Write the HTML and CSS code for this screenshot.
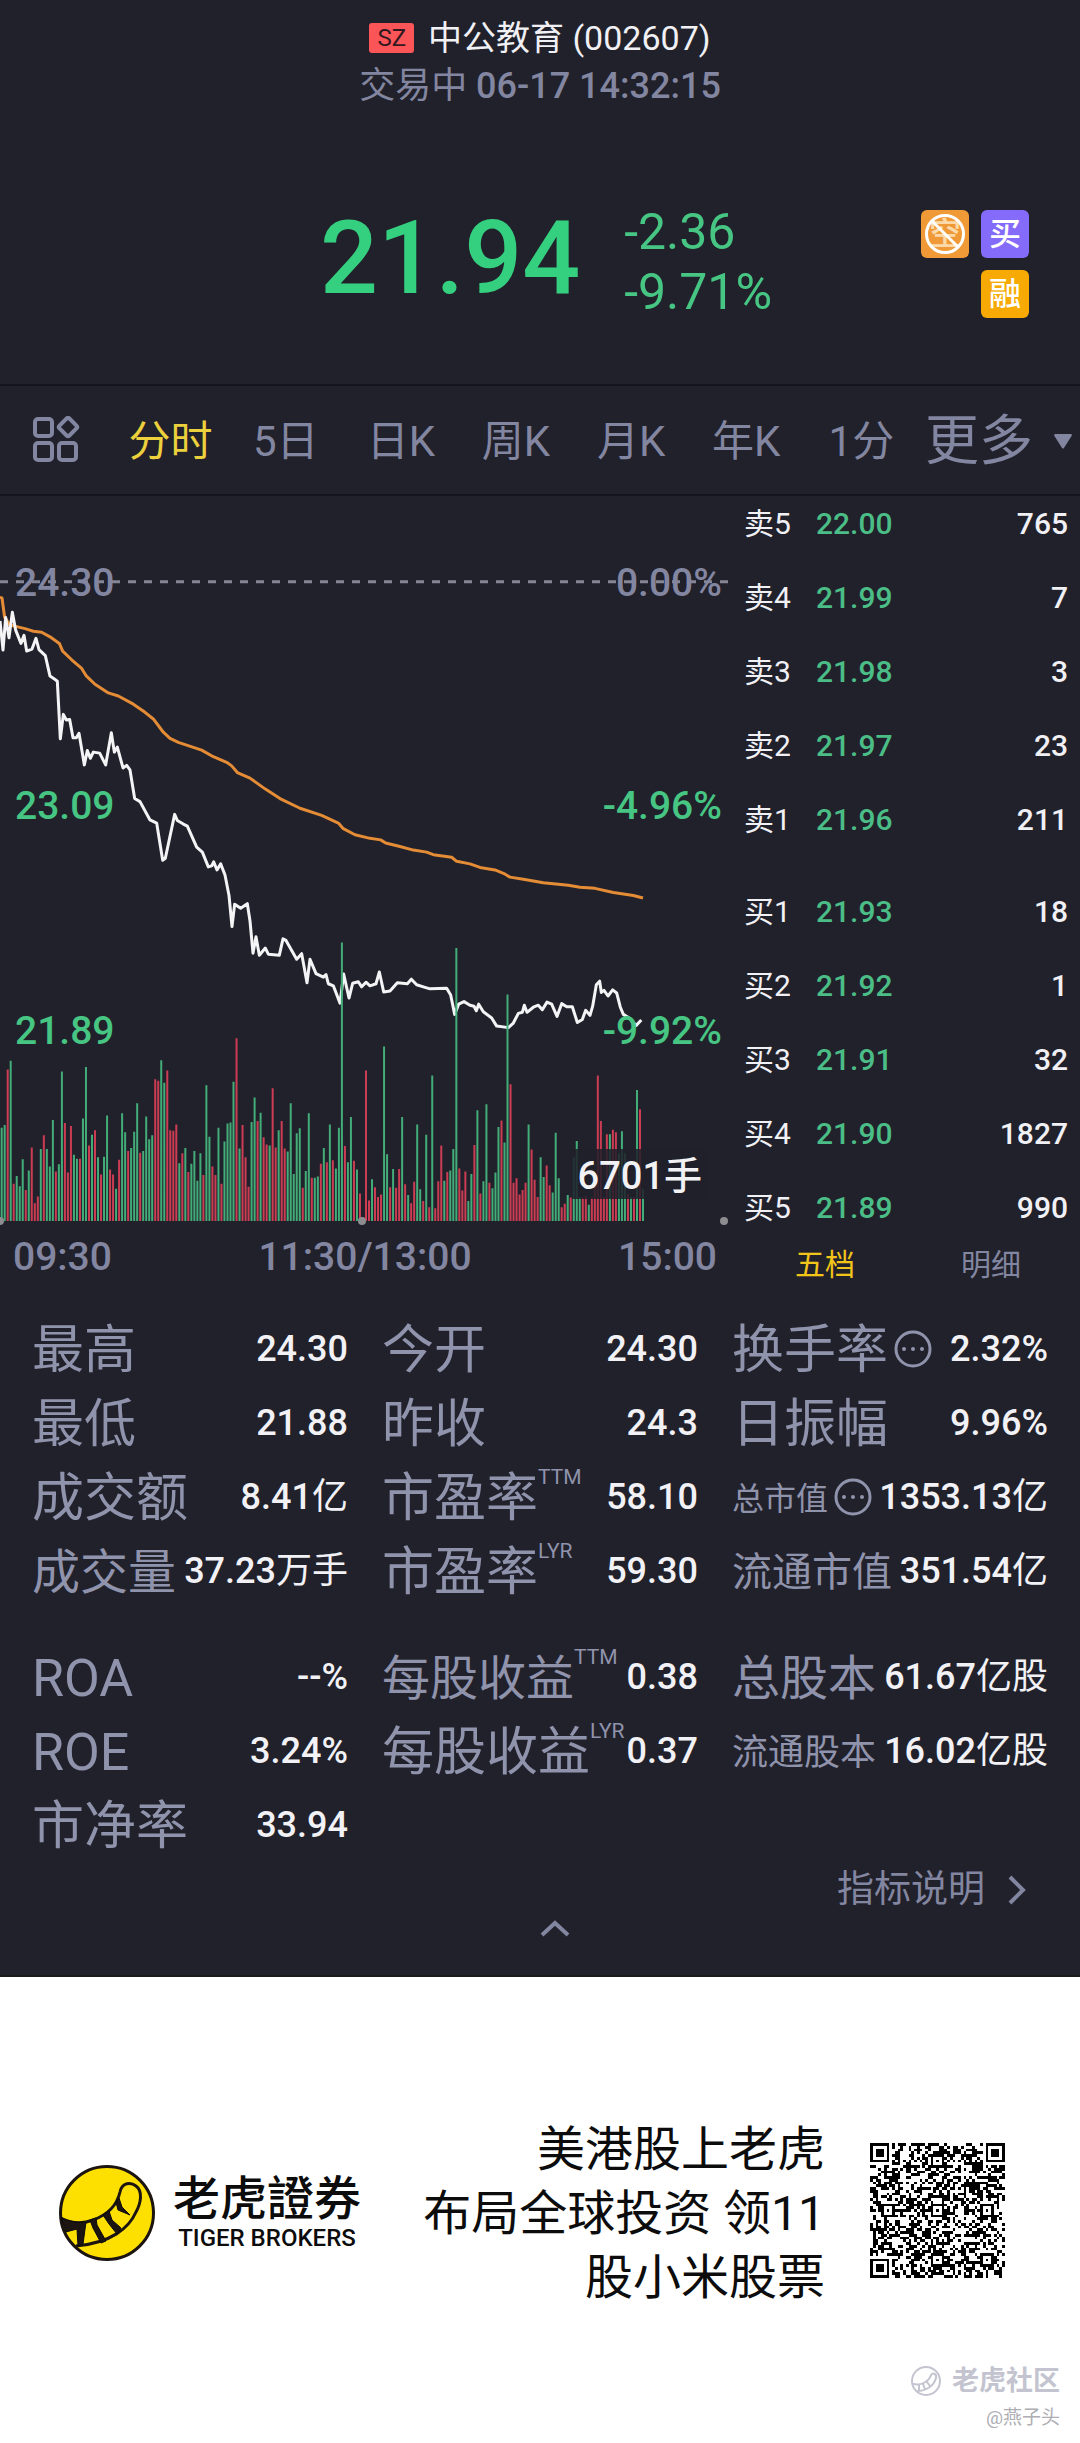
FILE: index.html
```html
<!DOCTYPE html>
<html lang="zh-CN">
<head>
<meta charset="utf-8">
<meta name="viewport" content="width=device-width, initial-scale=1">
<title>中公教育 (002607)</title>
<link rel="stylesheet" href="styles.css">
</head>
<body>
<main class="panel">
  <header class="quote">
    <h1 class="quote-title"><span class="market">SZ</span>中公教育 (002607)</h1>
    <p class="quote-time">交易中 <b>06-17 14:32:15</b></p>
    <div class="quote-row">
      <div class="quote-figures">
        <strong class="price">21.94</strong>
        <div class="change"><span>-2.36</span><span>-9.71%</span></div>
      </div>
      <div class="flags">
        <span class="flag flag-short">空
          <svg viewBox="0 0 48 48" aria-hidden="true"><circle cx="24" cy="24" r="18.5"/><path d="M11 11 37 37"/></svg>
        </span>
        <span class="flag flag-buy">买</span>
        <span class="flag flag-margin">融</span>
      </div>
    </div>
  </header>

  <nav class="tabs">
    <button class="tab-grid" aria-label="布局">
      <svg viewBox="0 0 48 48" aria-hidden="true"><rect x="2" y="3" width="17" height="17" rx="3"/><rect x="2" y="27" width="17" height="17" rx="3"/><rect x="26" y="27" width="17" height="17" rx="3"/><rect x="28" y="4" width="14" height="14" rx="2" transform="rotate(45 35 11)"/></svg>
    </button>
    <button class="tab active">分时</button>
    <button class="tab">5日</button>
    <button class="tab">日K</button>
    <button class="tab">周K</button>
    <button class="tab">月K</button>
    <button class="tab">年K</button>
    <button class="tab">1分</button>
    <button class="tab tab-more">更多<svg viewBox="0 0 18 16" aria-hidden="true"><path d="M2 2H16L9 13Z"/></svg></button>
  </nav>

  <section class="market-view">
    <div class="chart">
      <div class="plot">
        <svg class="plot-svg" viewBox="0 12 2184 1421" preserveAspectRatio="none" role="img" aria-label="分时走势">
          <path class="base-line" d="M0 180H2184"/>
          <path class="average" d="M0 210 6 212 14 250 30 265 50 268 75 272 100 277 125 279 150 288 178 301 188 316 215 333 245 350 258 364 285 381 325 398 355 404 400 420 435 436 460 449 490 475 510 487 535 495 605 510 640 523 680 534 695 541 712 554 750 565 795 586 840 605 900 624 965 638 1015 653 1030 664 1065 676 1110 683 1142 686 1157 692 1200 699 1240 706 1280 710 1300 715 1355 720 1370 728 1410 733 1440 740 1485 745 1512 752 1530 759 1570 763 1630 770 1705 775 1740 779 1785 781 1840 789 1900 795 1929 800"/>
          <path class="trend" d="M0 257 9 314 17 250 27 290 37 240 47 275 63 301 72 285 80 316 96 312 108 291 117 313 136 325 150 365 162 370 172 375 181 488 190 440 199 451 209 450 219 486 229 486 237 477 253 539 262 511 271 526 280 514 299 516 317 539 334 476 343 514 352 504 369 545 380 540 390 549 404 605 420 611 450 647 470 653 488 726 496 722 524 636 532 648 550 655 562 659 590 700 607 710 625 739 635 737 641 729 651 745 662 733 675 755 687 795 696 856 704 812 722 820 742 811 750 845 759 908 768 876 778 912 796 898 805 910 838 912 849 880 858 883 890 920 905 909 921 966 930 920 948 948 970 955 978 950 985 968 1000 972 1020 1006 1031 949 1047 996 1058 967 1075 964 1085 974 1098 965 1110 972 1128 968 1138 945 1151 984 1170 982 1192 966 1222 968 1234 959 1250 970 1270 974 1290 978 1340 977 1352 990 1364 1028 1376 1008 1392 1003 1410 1010 1422 1012 1429 1021 1436 1008 1450 1023 1475 1035 1490 1051 1525 1054 1540 1045 1555 1026 1567 1024 1573 1010 1581 1024 1600 1014 1615 1010 1627 1019 1641 1004 1655 1008 1671 1032 1685 1007 1700 1013 1717 1013 1732 1044 1747 1038 1757 1020 1770 1030 1778 1012 1789 970 1799 963 1804 985 1812 981 1824 992 1838 980 1850 986 1861 1014 1870 1028 1890 1036 1908 1050 1924 1039"/>
          <path class="volume-up" id="volume-up"/>
          <path class="volume-down" id="volume-down"/>
        </svg>
        <div class="axis axis-top"><span>24.30</span><span>0.00%</span></div>
        <div class="axis axis-mid"><span>23.09</span><span>-4.96%</span></div>
        <div class="axis axis-low"><span>21.89</span><span>-9.92%</span></div>
        <span class="volume-label">6701手</span>
        <div class="ticks"><i></i><i></i><i></i></div>
      </div>
      <div class="times"><span>09:30</span><span>11:30/13:00</span><span>15:00</span></div>
    </div>

    <div class="book">
      <table class="levels">
        <tbody>
          <tr><th scope="row">卖5</th><td>22.00</td><td>765</td></tr>
          <tr><th scope="row">卖4</th><td>21.99</td><td>7</td></tr>
          <tr><th scope="row">卖3</th><td>21.98</td><td>3</td></tr>
          <tr><th scope="row">卖2</th><td>21.97</td><td>23</td></tr>
          <tr><th scope="row">卖1</th><td>21.96</td><td>211</td></tr>
        </tbody>
        <tbody class="bids">
          <tr><th scope="row">买1</th><td>21.93</td><td>18</td></tr>
          <tr><th scope="row">买2</th><td>21.92</td><td>1</td></tr>
          <tr><th scope="row">买3</th><td>21.91</td><td>32</td></tr>
          <tr><th scope="row">买4</th><td>21.90</td><td>1827</td></tr>
          <tr><th scope="row">买5</th><td>21.89</td><td>990</td></tr>
        </tbody>
      </table>
      <div class="book-tabs"><button class="active">五档</button><button>明细</button></div>
    </div>
  </section>

  <section class="stats">
    <dl class="stat-grid">
      <div class="stat"><dt>最高</dt><dd>24.30</dd></div>
      <div class="stat"><dt>今开</dt><dd>24.30</dd></div>
      <div class="stat"><dt>换手率<svg class="info" viewBox="0 0 38 38" aria-hidden="true"><circle class="ring" cx="19" cy="19" r="17"/><circle cx="10" cy="19" r="2"/><circle cx="19" cy="19" r="2"/><circle cx="28" cy="19" r="2"/></svg></dt><dd>2.32%</dd></div>
      <div class="stat"><dt>最低</dt><dd>21.88</dd></div>
      <div class="stat"><dt>昨收</dt><dd>24.3</dd></div>
      <div class="stat"><dt>日振幅</dt><dd>9.96%</dd></div>
      <div class="stat"><dt>成交额</dt><dd>8.41<span class="unit">亿</span></dd></div>
      <div class="stat"><dt>市盈率<sup>TTM</sup></dt><dd>58.10</dd></div>
      <div class="stat"><dt class="label-xs">总市值<svg class="info" viewBox="0 0 38 38" aria-hidden="true"><circle class="ring" cx="19" cy="19" r="17"/><circle cx="10" cy="19" r="2"/><circle cx="19" cy="19" r="2"/><circle cx="28" cy="19" r="2"/></svg></dt><dd>1353.13<span class="unit">亿</span></dd></div>
      <div class="stat"><dt class="label-lg">成交量</dt><dd>37.23<span class="unit">万手</span></dd></div>
      <div class="stat"><dt>市盈率<sup>LYR</sup></dt><dd>59.30</dd></div>
      <div class="stat"><dt class="label-md">流通市值</dt><dd>351.54<span class="unit">亿</span></dd></div>
    </dl>
    <dl class="stat-grid">
      <div class="stat"><dt>ROA</dt><dd>--%</dd></div>
      <div class="stat"><dt class="label-lg">每股收益<sup>TTM</sup></dt><dd>0.38</dd></div>
      <div class="stat"><dt class="label-lg">总股本</dt><dd>61.67<span class="unit">亿股</span></dd></div>
      <div class="stat"><dt>ROE</dt><dd>3.24%</dd></div>
      <div class="stat"><dt>每股收益<sup>LYR</sup></dt><dd>0.37</dd></div>
      <div class="stat"><dt class="label-sm">流通股本</dt><dd>16.02<span class="unit">亿股</span></dd></div>
      <div class="stat"><dt>市净率</dt><dd>33.94</dd></div>
    </dl>
    <a class="guide" href="#guide">指标说明<svg viewBox="0 0 20 32" aria-hidden="true"><path d="M3 3 16 16 3 29"/></svg></a>
    <button class="collapse" aria-label="收起"><svg viewBox="0 0 32 18" aria-hidden="true"><path d="M3 15 16 3 29 15"/></svg></button>
  </section>
</main>

<footer class="promo">
  <div class="promo-row">
    <div class="brand">
      <svg class="brand-mark" viewBox="0 0 96 96" aria-hidden="true">
        <circle cx="48" cy="48" r="46.500" fill="#fde000" stroke="#1c1410" stroke-width="3"/>
        <path d="M2 54C12 58 24 59 34 55C48 50 58 40 61 27C63 17 72 17 77 21C84 26 82 38 77 47C70 63 52 78 17 81" fill="none" stroke="#1c1410" stroke-width="3"/>
        <path d="M2 52C11 57 19 58 27 57L24 79 19 81 18 64 7 67ZM31 55 37 53 38 60 47 76 42 78 34 63ZM44 50 50 46 53 55 62 63 58 69 50 59ZM57 37 60 33 63 42 71 50 59 45Z" fill="#1c1410"/>
      </svg>
      <div class="brand-text"><strong>老虎證券</strong><span>TIGER BROKERS</span></div>
    </div>
    <p class="slogan">美港股上老虎<br>布局全球投资 领11<br>股小米股票</p>
    <svg class="qr" viewBox="0 0 49 49" role="img" aria-label="二维码" shape-rendering="crispEdges"><path id="qr-modules"/></svg>
  </div>
  <div class="community">
    <span class="community-name"><svg viewBox="0 0 32 32" aria-hidden="true"><circle cx="16" cy="16" r="14"/><path d="M3 19C12 21 19 16 21 10C23 7 27 9 26 13C24 21 16 26 7 26M9 20V25M13 19 15 24M17 17 20 21"/></svg>老虎社区</span>
    <span class="community-user">@燕子头</span>
  </div>
</footer>
<script src="chart.js"></script>
</body>
</html>
```
FILE: styles.css
```css
* { box-sizing: border-box; }
body { margin: 0; background: #fff; font-family: Roboto, "Noto Sans CJK SC", sans-serif; }
h1, p, dl, dd { margin: 0; }
button { padding: 0; border: 0; background: none; color: inherit; font: inherit; }
a { color: inherit; text-decoration: none; }
svg { display: block; fill: none; stroke: currentColor; }

.panel { background: #21212b; color: #8386a0; border-bottom: 2px solid #1b191c; }

.quote { padding: 14px 0 64px; }
.quote-title { display: flex; justify-content: center; align-items: center; gap: 14px; line-height: 48px; font-size: 34px; font-weight: 400; color: #f0f0f5; }
.market { padding: 0 8px; border-radius: 3px; background: #fb5558; color: #33181f; font-size: 24px; line-height: 30px; }
.quote-time { text-align: center; font-size: 36px; line-height: 48px; }
.quote-time b { font-weight: 500; }
.quote-row { display: grid; grid-template-columns: 1fr auto 1fr; align-items: start; margin-top: 92px; padding: 0 51px 0 63px; }
.quote-figures { grid-column: 2; display: flex; gap: 44px; color: #35d07f; }
.price { font-size: 102px; line-height: 112px; font-weight: 500; }
.change { display: flex; flex-direction: column; font-size: 50px; line-height: 60px; color: #46c583; }
.flags { justify-self: end; display: grid; grid-template-columns: 48px 48px; gap: 12px; padding-top: 8px; }
.flag { position: relative; border-radius: 6px; color: #fff; text-align: center; font-size: 32px; font-weight: 500; line-height: 48px; }
.flag-short { background: #f09a37; color: #fbd9a8; }
.flag-short svg { position: absolute; inset: 0; stroke: #fff; stroke-width: 3; }
.flag-buy { background: #846bfa; }
.flag-margin { grid-column: 2; background: #f8aa04; }

.tabs { display: grid; grid-template-columns: 80px repeat(7, 1fr) 161px; align-items: center; margin-top: -2px; padding-left: 33px; border-top: 2px solid #14141d; border-bottom: 2px solid #14141d; font-size: 42px; line-height: 104px; }
.tab-grid svg { width: 48px; stroke-width: 4; }
.tab { padding-top: 4px; white-space: nowrap; }
.tab.active { color: #ecd03c; }
.tab-more { display: flex; align-items: center; gap: 20px; padding-left: 6px; font-size: 54px; }
.tab-more svg { width: 20px; fill: currentColor; stroke-width: 2; stroke-linejoin: round; }

.market-view { display: grid; grid-template-columns: 728fr 352fr; }
.plot { position: relative; }
.plot-svg { width: 100%; aspect-ratio: 728 / 725; }
.plot-svg path { vector-effect: non-scaling-stroke; stroke-width: 3; stroke-linejoin: round; }
.plot-svg .base-line { stroke: #858796; stroke-width: 3; stroke-dasharray: 8 8; }
.plot-svg .average { stroke: #e58c36; }
.plot-svg .trend { stroke: #f4f4f6; }
.plot-svg .volume-up { stroke: #43ad79; stroke-width: 2; }
.plot-svg .volume-down { stroke: #cc3d54; stroke-width: 2; }
.axis { position: absolute; left: 0; right: 0; display: flex; justify-content: space-between; padding: 0 6px 0 15px; font-size: 39px; line-height: 44px; font-weight: 500; color: #46c583; }
.axis-top { top: 9%; color: #8386a0; }
.axis-mid { top: 40%; margin-top: -2px; }
.axis-low { top: 71%; margin-top: -2px; }
.volume-label { position: absolute; right: 20px; bottom: 22px; padding: 4px 6px 0; background: rgba(32, 32, 42, .85); color: #f2f2f5; font-size: 38px; line-height: 46px; font-weight: 500; }
.ticks { position: absolute; left: -4px; right: 0; bottom: -4px; display: flex; justify-content: space-between; }
.ticks i { width: 8px; height: 8px; border-radius: 50%; background: #8d8d90; }
.times { display: flex; justify-content: space-between; padding: 0 11px 0 13px; font-size: 39px; line-height: 72px; font-weight: 500; }

.levels { width: 100%; border-collapse: collapse; font-size: 30px; line-height: 56px; color: #f0f0f5; }
.levels th, .levels td { padding: 0 0 18px; text-align: left; font-weight: 500; }
.levels th { width: 88px; padding-left: 16px; font-weight: 400; }
.levels td:nth-child(2) { color: #4bbd86; }
.levels td:last-child { padding-right: 12px; text-align: right; }
.levels .bids tr:first-child > * { padding-top: 18px; }
.levels .bids tr:last-child > * { padding-bottom: 0; }
.book-tabs { display: grid; grid-template-columns: 1fr 1fr; padding: 9px 6px 0 14px; font-size: 30px; line-height: 40px; }
.book-tabs .active { color: #f0c419; }

.stats { display: flex; flex-direction: column; padding: 19px 32px 0; }
.stat-grid { display: grid; grid-template-columns: repeat(3, 1fr); column-gap: 34px; }
.stat-grid + .stat-grid { margin-top: 32px; }
.stat { display: flex; align-items: center; justify-content: space-between; height: 74px; white-space: nowrap; }
.stat dt { display: flex; align-items: center; padding-top: 4px; font-size: 52px; line-height: 74px; color: #9093ac; }
.stat .label-lg { font-size: 48px; }
.stat .label-md { font-size: 40px; }
.stat .label-sm { font-size: 36px; }
.stat .label-xs { font-size: 32px; }
.stat dd { color: #f2f2f6; font-size: 36px; line-height: 74px; font-weight: 500; }
.unit { font-weight: 400; }
.stat sup { align-self: flex-start; font-size: 21px; line-height: 30px; }
.info { width: 38px; margin: 0 0 4px 6px; }
.info circle { fill: currentColor; stroke: none; }
.info .ring { fill: none; stroke: currentColor; stroke-width: 3; }
.guide { align-self: flex-end; display: flex; align-items: center; gap: 22px; padding-right: 21px; font-size: 37px; line-height: 56px; }
.guide svg { width: 20px; stroke-width: 4; }
.collapse { align-self: center; padding: 2px 0 37px 30px; }
.collapse svg { width: 32px; stroke-width: 4; }

.promo { padding: 139px 0 6px; color: #0c0c0c; }
.promo-row { display: flex; align-items: center; padding: 0 75px 0 59px; }
.brand { display: flex; align-items: center; gap: 18px; }
.brand-mark { width: 96px; }
.brand-text { display: flex; flex-direction: column; align-items: center; padding-top: 4px; }
.brand-text strong { font-size: 47px; line-height: 46px; font-weight: 500; }
.brand-text span { font-size: 24px; line-height: 32px; font-weight: 500; }
.slogan { margin-left: auto; padding-top: 2px; text-align: right; font-size: 48px; line-height: 64px; }
.qr { width: 135px; margin: 0 0 6px 45px; stroke: none; fill: #000; }
.community { display: flex; flex-direction: column; align-items: flex-end; margin-top: 53px; padding-right: 20px; line-height: 38px; color: #c3c4cf; }
.community-name { display: flex; align-items: center; gap: 10px; font-size: 27px; line-height: 36px; font-weight: 700; }
.community-name svg { width: 32px; stroke-width: 2; }
.community-user { font-size: 19px; color: #aeaeb4; }
```
FILE: chart.js
```js
// Top of each one-minute volume bar; a minus sign marks a falling minute.
const bars = [
  1250, 1245, -1136, 1119, -1360, 1345, 1365, 1312, -1372, 1334, -1289, -1398, -1385, 1292, -1265, 1292, 1326, 1235, -1336, 1322,
  1140, -1241, -1338, -1247, 1303, 1311, -1311, 1232, 1131, -1285, 1264, -1255, 1308, -1342, 1307, 1226, -1332, -1342, 1370, -1313,
  1222, 1259, -1296, 1290, 1258, 1202, -1299, 1296, 1228, 1273, 1265, -1155, -1158, 1118, 1162, -1138, -1255, -1256, -1244, 1320,
  -1300, 1290, -1337, 1321, 1296, 1354, 1300, -1343, 1167, 1268, -1326, -1343, 1250, -1360, 1277, 1242, 1240, 1160, -1075, 1291,
  -1245, -1308, -1366, 1239, 1191, -1237, 1221, -1269, -1283, 1285, -1173, -1289, 1255, -1237, -1291, 1297, 1202, 1341, 1261, 1251,
  -1368, 1335, 1222, -1348, 1348, 1346, -1321, 1290, -1318, 1244, -1314, 1330, 1250, 887, -1286, 1318, 1229, -1315, 1332, -1379,
  -1425, -1138, -1393, 1351, -1367, -1386, -1381, 1091, 1302, -1367, 1331, -1368, -1331, 1229, -1361, 1382, -1398, -1356, 1244, 1371,
  -1394, 1264, -1406, 1148, -1408, -1355, -1285, 1354, -1337, 1334, 1292, 898, -1330, -1373, -1336, 1394, 1341, -1284, 1216, -1379,
  1355, 1204, -1358, 1369, 1338, 1249, -1236, 1279, 989, -1165, -1358, -1349, -1381, -1372, -1358, 1244, -1293, -1352, -1386, 1308,
  1347, -1324, -1363, 1377, 1260, 1349, -1406, -1399, 1382, -1387, 1308, 1276, 1386, -1387, -1384, 1401, -1386, -1350, -1148, -1237,
  -1386, -1263, 1263, -1254, -1259, 1300, 1257, 1300, -1380, 1386, -1386, 1176, -1214, 1370
];
let up = '';
let down = '';
bars.forEach((top, i) => {
  const segment = `M${(5 + i * 9.033).toFixed(1)} 1433V${Math.abs(top)}`;
  if (top > 0) up += segment; else down += segment;
});
document.getElementById('volume-up').setAttribute('d', up);
document.getElementById('volume-down').setAttribute('d', down);

// Code modules: finder and alignment squares, timing lines, then the data area.
const size = 49;
const centres = [6, 24, 42];
let seed = 2607;
const bit = () => { seed = (seed * 1103515245 + 12345) % 2147483648; return seed / 2147483648 < 0.5; };
const isDark = (x, y) => {
  const data = bit();
  for (const [cx, cy] of [[3, 3], [size - 4, 3], [3, size - 4]]) {
    const ring = Math.max(Math.abs(x - cx), Math.abs(y - cy));
    if (ring <= 4) return ring < 2 || ring === 3;
  }
  for (const cy of centres) for (const cx of centres) {
    const ring = Math.max(Math.abs(x - cx), Math.abs(y - cy));
    const corner = (cx === 6 && cy !== 24) || (cy === 6 && cx === 42);
    if (!corner && ring <= 2) return ring !== 1;
  }
  if (x === 6 || y === 6) return (x + y) % 2 === 0;
  return data;
};
let modules = '';
for (let y = 0; y < size; y++) for (let x = 0; x < size; x++) if (isDark(x, y)) modules += `M${x} ${y}h1v1h-1z`;
document.getElementById('qr-modules').setAttribute('d', modules);
```
